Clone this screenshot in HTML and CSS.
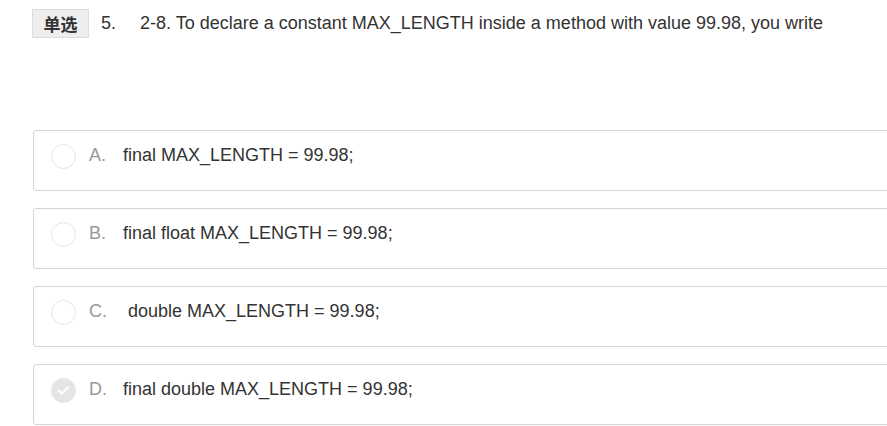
FILE: index.html
```html
<!DOCTYPE html>
<html>
<head>
<meta charset="utf-8">
<link rel="stylesheet" href="styles.css">
</head>
<body>
<div class="page">
  <div class="question">
    <span class="badge">单选</span>
    <span class="qnum">5.</span>
    <span class="qtext">2-8. To declare a constant MAX_LENGTH inside a method with value 99.98, you write</span>
  </div>
  <div class="options">
    <div class="option">
      <span class="radio"></span>
      <span class="letter">A.</span>
      <span class="otext">final MAX_LENGTH = 99.98;</span>
    </div>
    <div class="option">
      <span class="radio"></span>
      <span class="letter">B.</span>
      <span class="otext">final float MAX_LENGTH = 99.98;</span>
    </div>
    <div class="option">
      <span class="radio"></span>
      <span class="letter">C.</span>
      <span class="otext">&nbsp;double MAX_LENGTH = 99.98;</span>
    </div>
    <div class="option">
      <span class="radio checked"><svg width="13" height="11" viewBox="0 0 13 11"><path d="M1.8 5.6 L5 8.6 L11.2 2.2" fill="none" stroke="#fff" stroke-width="2.2" stroke-linecap="round" stroke-linejoin="round"/></svg></span>
      <span class="letter">D.</span>
      <span class="otext">final double MAX_LENGTH = 99.98;</span>
    </div>
  </div>
</div>
</body>
</html>
```
FILE: styles.css
```css
html, body {
  margin: 0;
  padding: 0;
  background: #fff;
  overflow: hidden;
}
body {
  font-family: "Liberation Sans", Arial, sans-serif;
  color: #333;
  font-size: 18px;
}
.page {
  padding: 9px 0 0 32px;
  width: 900px;
}
.question {
  display: flex;
  align-items: center;
  height: 29px;
}
.badge {
  box-sizing: border-box;
  width: 57px;
  height: 29px;
  display: flex;
  align-items: center;
  justify-content: center;
  background: #eee;
  border: 1px solid #ddd;
  font-family: "Noto Sans CJK SC", sans-serif;
  font-weight: bold;
  font-size: 17px;
  color: #333;
}
.qnum {
  margin-left: 12px;
  width: 39px;
}
.options {
  margin-top: 92px;
  display: flex;
  flex-direction: column;
  gap: 17px;
  padding-left: 1px;
}
.option {
  box-sizing: border-box;
  height: 61px;
  border: 1px solid #d4d4d4;
  border-radius: 3px;
  display: flex;
  align-items: flex-start;
  padding: 13px 0 0 17px;
}
.radio {
  box-sizing: border-box;
  width: 25px;
  height: 25px;
  border-radius: 50%;
  border: 1px solid #e6e6e6;
  display: flex;
  align-items: center;
  justify-content: center;
}
.radio.checked {
  background: #e5e5e5;
  border-color: #e5e5e5;
}
.letter {
  color: #999;
  margin-left: 13px;
  width: 34px;
  line-height: 23px;
}
.otext {
  line-height: 23px;
}
```
